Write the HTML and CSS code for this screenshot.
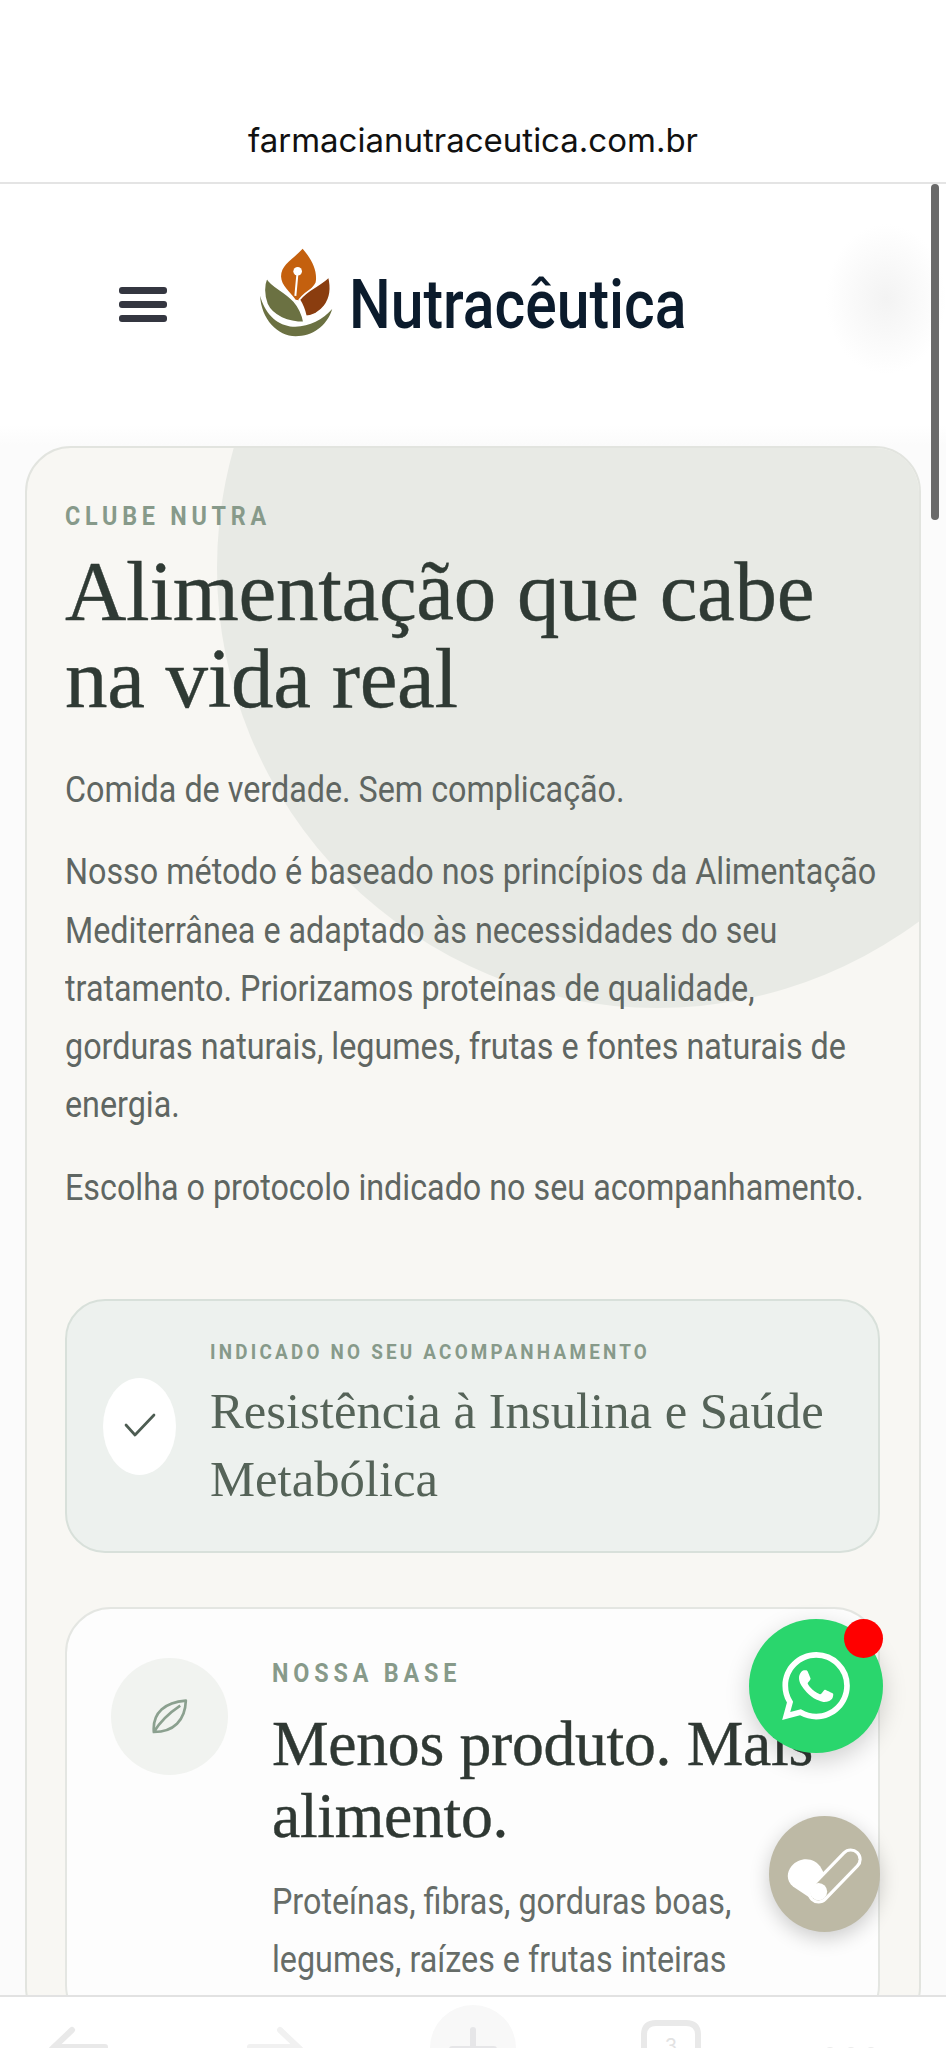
FILE: index.html
```html
<!DOCTYPE html>
<html lang="pt-BR">
<head>
    <meta charset="UTF-8">
    <title>Clube Nutra</title>
    <link rel="stylesheet" href="styles.css">
</head>
<body>

<div class="phone">
    <div class="url-bar"><span>farmacianutraceutica.com.br</span></div>

    <div class="scroll-area">
        <header class="site-header">
            <div class="burger"><i></i><i></i><i></i></div>
            <div class="logo">
                <svg class="logo-mark" viewBox="50 50 240 280">
                    <path fill="#c4600e" d="M193 58C165 90 128 105 128 142C129 170 155 188 172 212L186 214C204 192 222 178 232 160C238 130 225 95 193 58Z"/>
                    <path d="M178 126L171 200" stroke="#fff" stroke-width="6"/>
                    <circle cx="178" cy="126" r="13" fill="#fff"/>
                    <path fill="#8a3d0f" stroke="#fff" stroke-width="5" d="M272 142C250 168 208 178 183 212C192 226 198 240 203 262C240 258 292 222 272 142Z"/>
                    <path fill="#6b7142" stroke="#fff" stroke-width="5" d="M85 145C105 185 180 190 197 280C150 280 102 262 86 226C76 200 74 172 85 145Z"/>
                    <path fill="#6b7142" d="M65 200C68 270 118 322 172 322C222 322 266 292 282 240C250 275 205 298 155 292C112 286 78 250 65 200Z"/>
                </svg>
                <span class="logo-text">Nutracêutica</span>
            </div>
            <div class="header-blur"></div>
        </header>

        <main class="content">
            <section class="hero-card">
                <div class="hero-circle"></div>
                <div class="hero-inner">
                    <p class="eyebrow narrow">CLUBE NUTRA</p>
                    <h1>Alimentação que cabe na vida real</h1>
                    <p class="body-text narrow">Comida de verdade. Sem complicação.</p>
                    <p class="body-text narrow">Nosso método é baseado nos princípios da Alimentação Mediterrânea e adaptado às necessidades do seu tratamento. Priorizamos proteínas de qualidade, gorduras naturais, legumes, frutas e fontes naturais de energia.</p>
                    <p class="body-text narrow">Escolha o protocolo indicado no seu acompanhamento.</p>

                    <div class="protocol">
                        <div class="protocol-check">
                            <svg viewBox="0 0 32 26" width="32" height="26"><path d="M2 12L11 22L30 2" fill="none" stroke="#4d5c52" stroke-width="2.7" stroke-linecap="round" stroke-linejoin="round"/></svg>
                        </div>
                        <div class="protocol-text">
                            <p class="protocol-label narrow">INDICADO NO SEU ACOMPANHAMENTO</p>
                            <p class="protocol-name">Resistência à Insulina e Saúde Metabólica</p>
                        </div>
                    </div>

                    <div class="base-card">
                        <div class="base-icon">
                            <svg viewBox="160 150 108 106" width="36" height="35">
                                <path d="M165 250C160 190 200 160 262 155C260 215 225 250 165 250Z M165 250C188 212 215 190 245 170" fill="none" stroke="#8ba08f" stroke-width="8" stroke-linejoin="round"/>
                            </svg>
                        </div>
                        <div class="base-text">
                            <p class="base-label narrow">NOSSA BASE</p>
                            <h2>Menos produto. Mais alimento.</h2>
                            <p class="base-desc narrow">Proteínas, fibras, gorduras boas, legumes, raízes e frutas inteiras</p>
                        </div>
                    </div>
                </div>
            </section>
        </main>

        <div class="scrollbar"></div>

        <a class="fab-whats">
            <svg viewBox="0 0 24 24" width="68" height="68"><path fill="#fff" d="M17.472 14.382c-.297-.149-1.758-.867-2.03-.967-.273-.099-.471-.148-.67.15-.197.297-.767.966-.94 1.164-.173.199-.347.223-.644.075-.297-.15-1.255-.463-2.39-1.475-.883-.788-1.48-1.761-1.653-2.059-.173-.297-.018-.458.13-.606.134-.133.298-.347.446-.52.149-.174.198-.298.298-.497.099-.198.05-.371-.025-.52-.075-.149-.669-1.612-.916-2.207-.242-.579-.487-.5-.669-.51-.173-.008-.371-.01-.57-.01-.198 0-.52.074-.792.372-.272.297-1.04 1.016-1.04 2.479 0 1.462 1.065 2.875 1.213 3.074.149.198 2.096 3.2 5.077 4.487.709.306 1.262.489 1.694.625.712.227 1.36.195 1.871.118.571-.085 1.758-.719 2.006-1.413.248-.694.248-1.289.173-1.413-.074-.124-.272-.198-.57-.347m-5.421 7.403h-.004a9.87 9.87 0 01-5.031-1.378l-.361-.214-3.741.982.998-3.648-.235-.374a9.86 9.86 0 01-1.51-5.26c.001-5.45 4.436-9.884 9.888-9.884 2.64 0 5.122 1.03 6.988 2.898a9.825 9.825 0 012.893 6.994c-.003 5.45-4.437 9.884-9.885 9.884m8.413-18.297A11.815 11.815 0 0012.05 0C5.495 0 .16 5.335.157 11.892c0 2.096.547 4.142 1.588 5.945L.057 24l6.305-1.654a11.882 11.882 0 005.683 1.448h.005c6.554 0 11.89-5.335 11.893-11.893a11.821 11.821 0 00-3.48-8.413z"/></svg>
            <span class="fab-dot"></span>
        </a>

        <a class="fab-pill">
            <svg viewBox="165 740 235 180" width="78" height="60">
                <path fill="#fff" d="M272 808C252 772 206 772 182 800C164 822 168 846 186 862L256 908L300 860Z"/>
                <path d="M263 880L360 780" stroke="#fff" stroke-width="66" stroke-linecap="round"/>
                <path d="M263 880L360 780" stroke="#bdb9a5" stroke-width="47" stroke-linecap="round"/>
                <circle cx="263" cy="877" r="26" fill="#fff"/>
            </svg>
        </a>
    </div>

    <nav class="bottom-bar">
        <svg class="nav-icons" viewBox="0 0 946 52" width="946" height="52">
            <circle cx="473" cy="51" r="43" fill="#f8f8f8"/>
            <g fill="none" stroke="#e9e9e9" stroke-width="6" stroke-linecap="round">
                <path d="M72 33L52 52M54 50H105"/>
                <path d="M280 33L300 52M298 50H250" stroke="#f1f1f1"/>
                <path d="M473 33V70M452 52H494" stroke="#e6e6e8"/>
                <path d="M644 60V38Q644 26 656 26H686Q698 26 698 38V60"/>
            </g>
            <text x="671" y="56" class="nav-count">3</text>
            <g fill="#ececec">
                <circle cx="830" cy="56" r="6"/>
                <circle cx="851" cy="56" r="6"/>
                <circle cx="871" cy="56" r="6"/>
            </g>
        </svg>
    </nav>
</div>

</body>
</html>
```

FILE: styles.css
```css
* {
    box-sizing: border-box;
}

body {
    margin: 0;
    font-family: Roboto, sans-serif;
    background: white;
}

p, h1, h2 {
    margin: 0;
}

/* no condensed face installed, so squeeze Roboto */
.narrow {
    width: 111.5%;
    transform: scaleX(.897);
    transform-origin: left;
}

.phone {
    display: flex;
    flex-direction: column;
    height: 100vh;
    overflow: hidden;
}

.url-bar {
    flex: none;
    height: 184px;
    padding-top: 120px;
    text-align: center;
    background: #fff;
    border-bottom: 2px solid #e4e4e4;
    font-family: Inter, 'Liberation Sans', sans-serif;
    font-size: 33px;
    line-height: 40px;
    color: #111;
}

.scroll-area {
    flex: 1;
    position: relative;
    overflow: hidden;
}

.site-header {
    position: relative;
    display: flex;
    align-items: center;
    height: 241px;
    padding: 0 0 0 119px;
    background: #fff;
}

.burger {
    display: flex;
    flex-direction: column;
    gap: 7px;
    width: 48px;
    margin-top: -1px;
}

.burger i {
    display: block;
    height: 7px;
    border-radius: 3px;
    background: #343640;
}

.logo {
    display: flex;
    align-items: center;
    margin-left: 88px;
}

.logo-mark {
    flex: none;
    width: 80px;
    height: 93px;
    margin-top: -24px;
}

.logo-text {
    margin-left: 14px;
    font-size: 68px;
    font-weight: 500;
    line-height: 80px;
    color: #0b1b2c;
    transform: scaleX(.865);
    transform-origin: left;
}

.header-blur {
    position: absolute;
    right: 0;
    top: 40px;
    width: 120px;
    height: 150px;
    background: radial-gradient(closest-side, #f3f3f3, rgba(255,255,255,0));
}

.content {
    padding: 21px 25px 0;
    background: linear-gradient(#fff, #fbfbfb 20px);
}

.hero-card {
    position: relative;
    overflow: hidden;
    border: 2px solid #e2e4df;
    border-radius: 46px;
    background: #f8f7f3;
}

.hero-circle {
    position: absolute;
    top: -320px;
    left: 190px;
    width: 880px;
    height: 880px;
    border-radius: 50%;
    background: #e8eae5;
}

.hero-inner {
    position: relative;
    padding: 52px 39px 0 38px;
}

.eyebrow {
    font-size: 26px;
    line-height: 32px;
    font-weight: bold;
    letter-spacing: 5.3px;
    color: #879a8a;
}

h1 {
    max-width: 790px;
    margin-top: 16px;
    margin-bottom: 39px;
    font-family: 'Liberation Serif', serif;
    font-weight: normal;
    font-size: 85px;
    line-height: 87px;
    letter-spacing: -.3px;
    color: #2f3a34;
    -webkit-text-stroke: .4px #2f3a34;
}

.body-text {
    margin-bottom: 24px;
    font-size: 36px;
    line-height: 58.3px;
    color: #5f6662;
}

.protocol {
    display: flex;
    align-items: center;
    gap: 34px;
    margin-top: 82px;
    height: 254px;
    padding: 0 36px;
    border: 2px solid #d8e0da;
    border-radius: 40px;
    background: #edf1ee;
}

.protocol-check {
    flex: 0 0 73px;
    height: 97px;
    display: flex;
    align-items: center;
    justify-content: center;
    border-radius: 50%;
    background: #fff;
}

.protocol-text {
    flex: 1;
    min-width: 0;
}

.protocol-label {
    margin-top: -1px;
    font-size: 21px;
    line-height: 28px;
    font-weight: bold;
    letter-spacing: 3.6px;
    color: #879a8a;
}

.protocol-name {
    margin-top: 11px;
    font-family: 'Liberation Serif', serif;
    font-size: 50.7px;
    line-height: 68px;
    color: #556358;
}

.base-card {
    display: flex;
    gap: 44px;
    margin-top: 54px;
    padding: 49px 44px 40px;
    border: 2px solid #e4e6e2;
    border-radius: 46px;
    background: #fdfdfd;
}

.base-icon {
    flex: 0 0 117px;
    height: 117px;
    display: flex;
    align-items: center;
    justify-content: center;
    border-radius: 50%;
    background: #f1f3f0;
}

.base-text {
    flex: 1;
    min-width: 0;
}

.base-label {
    margin-top: -1px;
    font-size: 26px;
    line-height: 32px;
    font-weight: bold;
    letter-spacing: 5.4px;
    color: #879a8a;
}

h2 {
    margin-top: 19px;
    margin-bottom: 21px;
    font-family: 'Liberation Serif', serif;
    font-weight: normal;
    font-size: 63.7px;
    line-height: 72px;
    letter-spacing: -.3px;
    color: #2f3833;
    -webkit-text-stroke: .4px #2f3833;
}

.base-desc {
    font-size: 36px;
    line-height: 58px;
    color: #666c68;
}

.scrollbar {
    position: absolute;
    top: 0;
    right: 7px;
    width: 8px;
    height: 336px;
    border-radius: 4px;
    background: #6a6a6a;
}

.fab-whats {
    position: absolute;
    left: 749px;
    top: 1435px;
    width: 134px;
    height: 134px;
    display: flex;
    align-items: center;
    justify-content: center;
    border-radius: 50%;
    background: #2ad66d;
    box-shadow: 0 8px 24px rgba(0,0,0,.18);
}

.fab-dot {
    position: absolute;
    top: 0;
    right: 0;
    width: 39px;
    height: 39px;
    border-radius: 50%;
    background: #ff0000;
}

.fab-pill {
    position: absolute;
    left: 769px;
    top: 1632px;
    width: 111px;
    height: 116px;
    display: flex;
    align-items: center;
    justify-content: center;
    padding-top: 4px;
    border-radius: 50%;
    background: #bdb9a5;
    box-shadow: 0 6px 20px rgba(0,0,0,.2);
}

.bottom-bar {
    flex: none;
    height: 53px;
    background: #fff;
    border-top: 2px solid #e2e2e2;
    overflow: hidden;
}

.nav-icons {
    display: block;
}

.nav-count {
    font-family: Inter, sans-serif;
    font-size: 20px;
    fill: #e2e2e2;
    text-anchor: middle;
}
```
